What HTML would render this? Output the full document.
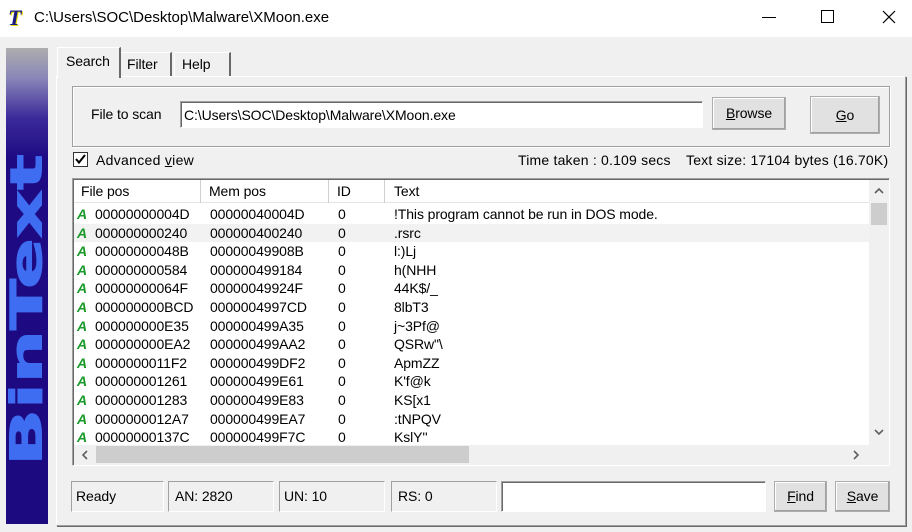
<!DOCTYPE html>
<html><head><style>
*{margin:0;padding:0;box-sizing:border-box}
body{width:912px;height:532px;background:#f0f0f0;font-family:"Liberation Sans",sans-serif;font-size:14px;color:#000;position:relative;overflow:hidden;letter-spacing:-0.1px}
.a{position:absolute;white-space:nowrap}
.btn{position:absolute;background:#e1e1e1;border:1px solid #adadad;box-shadow:inset -1px -1px 0 #a0a0a0,inset 1px 1px 0 #fff;text-align:center}
.sunk{position:absolute;border:1px solid;border-color:#a0a0a0 #fff #fff #a0a0a0;box-shadow:inset 1px 1px 0 #696969}
.panel{position:absolute;border:1px solid;border-color:#a0a0a0 #fff #fff #a0a0a0}
.row{position:absolute;left:74px;width:795px;height:18px;line-height:18px}
.row span{position:absolute}
.g{color:#1a9a2a;font-weight:bold;font-style:italic;left:3px}
</style></head><body>
<div class="a" style="left:0;top:0;width:912px;height:37px;background:#fff"></div>
<div class="a" style="left:8px;top:5px;font-size:22px;font-weight:bold;font-style:italic;color:#1a1a80;text-shadow:1px 1px 0 #e8d800;font-family:'Liberation Serif',serif">T</div>
<div class="a" style="left:34px;top:9px;font-size:15px;letter-spacing:0">C:\Users\SOC\Desktop\Malware\XMoon.exe</div>
<div class="a" style="left:762px;top:17px;width:14px;height:1px;background:#000"></div>
<div class="a" style="left:821px;top:10px;width:13px;height:13px;border:1px solid #000"></div>
<svg class="a" style="left:882px;top:10px" width="14" height="14"><path d="M1 1L13 13M13 1L1 13" stroke="#000" stroke-width="1.2"/></svg>

<div class="a" style="left:6px;top:48px;width:42px;height:476px;background:linear-gradient(#aeaeae 0,#8a86b8 30px,#3b2a9a 70px,#1e0b84 110px,#1c0a80 476px)"></div>
<div class="a" style="left:27px;top:310px;transform:translate(-50%,-50%) rotate(-90deg) scaleX(1.7);font-family:'DejaVu Sans',sans-serif;font-weight:900;font-size:44px;color:#3f6df2;letter-spacing:0;-webkit-text-stroke:1px #3f6df2">BinText</div>

<div class="panel" style="left:56px;top:76px;width:850px;height:450px;border-color:#fff #a0a0a0 #a0a0a0 #fff;box-shadow:1px 1px 0 #696969"></div>
<div class="a" style="left:57px;top:47px;width:64px;height:31px;background:#f0f0f0;border:1px solid #fff;border-right:2px solid #696969;border-bottom:none"></div>
<div class="a" style="left:66px;top:53px">Search</div>
<div class="a" style="left:121px;top:52px;width:51px;height:24px;border-top:1px solid #fff;border-right:2px solid #696969"></div>
<div class="a" style="left:127px;top:56px">Filter</div>
<div class="a" style="left:174px;top:52px;width:57px;height:24px;border-left:1px solid #fff;border-top:1px solid #fff;border-right:2px solid #696969"></div>
<div class="a" style="left:182px;top:56px">Help</div>

<div class="a" style="left:72px;top:86px;width:818px;height:61px;border:1px solid #a0a0a0;box-shadow:1px 1px 0 #fff,inset 1px 1px 0 #fff"></div>
<div class="a" style="left:91px;top:106px">File to scan</div>
<div class="sunk" style="left:180px;top:101px;width:523px;height:27px;background:#fff"></div>
<div class="a" style="left:184px;top:107px">C:\Users\SOC\Desktop\Malware\XMoon.exe</div>
<div class="btn" style="left:712px;top:97px;width:74px;height:33px;line-height:31px"><u>B</u>rowse</div>
<div class="btn" style="left:810px;top:96px;width:70px;height:38px;line-height:36px"><u>G</u>o</div>

<div class="a" style="left:73px;top:152px;width:15px;height:15px;background:#fff;border:1px solid #333"></div>
<svg class="a" style="left:75px;top:154px" width="11" height="11"><path d="M1 5L4 8.5L10 1" stroke="#000" stroke-width="2" fill="none"/></svg>
<div class="a" style="left:96px;top:152px;letter-spacing:0.3px">Advanced <u>v</u>iew</div>
<div class="a" style="left:518px;top:152px;letter-spacing:0.2px">Time taken : 0.109 secs</div>
<div class="a" style="left:686px;top:152px;letter-spacing:0.2px">Text size: 17104 bytes (16.70K)</div>

<div class="sunk" style="left:72px;top:178px;width:818px;height:288px;background:#fff"></div>
<div class="a" style="left:74px;top:180px;width:795px;height:23px;background:#fff;border-bottom:1px solid #e5e5e5"></div>
<div class="a" style="left:200px;top:180px;width:1px;height:23px;background:#d0d0d0"></div>
<div class="a" style="left:328px;top:180px;width:1px;height:23px;background:#d0d0d0"></div>
<div class="a" style="left:384px;top:180px;width:1px;height:23px;background:#d0d0d0"></div>
<div class="a" style="left:81px;top:183px">File pos</div>
<div class="a" style="left:209px;top:183px">Mem pos</div>
<div class="a" style="left:337px;top:183px">ID</div>
<div class="a" style="left:394px;top:183px">Text</div>
<div class="a" style="left:869px;top:180px;width:20px;height:265px;background:#f0f0f0"></div>
<svg class="a" style="left:874px;top:187px" width="10" height="7"><path d="M1 6L5 2L9 6" stroke="#606060" stroke-width="1.6" fill="none"/></svg>
<div class="a" style="left:871px;top:203px;width:16px;height:22px;background:#cdcdcd"></div>
<svg class="a" style="left:874px;top:429px" width="10" height="7"><path d="M1 1L5 5L9 1" stroke="#606060" stroke-width="1.6" fill="none"/></svg>
<div class="a" style="left:74px;top:445px;width:815px;height:20px;background:#f0f0f0"></div>
<div class="a" style="left:96px;top:446px;width:373px;height:17px;background:#cdcdcd"></div>
<svg class="a" style="left:81px;top:450px" width="7" height="10"><path d="M6 1L2 5L6 9" stroke="#606060" stroke-width="1.6" fill="none"/></svg>
<svg class="a" style="left:853px;top:450px" width="7" height="10"><path d="M1 1L5 5L1 9" stroke="#606060" stroke-width="1.6" fill="none"/></svg>

<div class="row" style="top:205px"><span class="g">A</span><span style="left:21px">00000000004D</span><span style="left:136px">00000040004D</span><span style="left:264px">0</span><span style="left:320px">!This program cannot be run in DOS mode.</span></div>
<div class="row" style="top:224px;background:#f2f2f2;width:795px"><span class="g">A</span><span style="left:21px">000000000240</span><span style="left:136px">000000400240</span><span style="left:264px">0</span><span style="left:320px">.rsrc</span></div>
<div class="row" style="top:242px"><span class="g">A</span><span style="left:21px">00000000048B</span><span style="left:136px">00000049908B</span><span style="left:264px">0</span><span style="left:320px">l:)Lj</span></div>
<div class="row" style="top:261px"><span class="g">A</span><span style="left:21px">000000000584</span><span style="left:136px">000000499184</span><span style="left:264px">0</span><span style="left:320px">h(NHH</span></div>
<div class="row" style="top:279px"><span class="g">A</span><span style="left:21px">00000000064F</span><span style="left:136px">00000049924F</span><span style="left:264px">0</span><span style="left:320px">44K$/_</span></div>
<div class="row" style="top:298px"><span class="g">A</span><span style="left:21px">000000000BCD</span><span style="left:136px">0000004997CD</span><span style="left:264px">0</span><span style="left:320px">8lbT3</span></div>
<div class="row" style="top:317px"><span class="g">A</span><span style="left:21px">000000000E35</span><span style="left:136px">000000499A35</span><span style="left:264px">0</span><span style="left:320px">j~3Pf@</span></div>
<div class="row" style="top:335px"><span class="g">A</span><span style="left:21px">000000000EA2</span><span style="left:136px">000000499AA2</span><span style="left:264px">0</span><span style="left:320px">QSRw"\</span></div>
<div class="row" style="top:354px"><span class="g">A</span><span style="left:21px">0000000011F2</span><span style="left:136px">000000499DF2</span><span style="left:264px">0</span><span style="left:320px">ApmZZ</span></div>
<div class="row" style="top:372px"><span class="g">A</span><span style="left:21px">000000001261</span><span style="left:136px">000000499E61</span><span style="left:264px">0</span><span style="left:320px">K'f@k</span></div>
<div class="row" style="top:391px"><span class="g">A</span><span style="left:21px">000000001283</span><span style="left:136px">000000499E83</span><span style="left:264px">0</span><span style="left:320px">KS[x1</span></div>
<div class="row" style="top:410px"><span class="g">A</span><span style="left:21px">0000000012A7</span><span style="left:136px">000000499EA7</span><span style="left:264px">0</span><span style="left:320px">:tNPQV</span></div>
<div class="row" style="top:428px;height:17px;overflow:hidden"><span class="g">A</span><span style="left:21px">00000000137C</span><span style="left:136px">000000499F7C</span><span style="left:264px">0</span><span style="left:320px">KslY''</span></div>

<div class="panel" style="left:71px;top:481px;width:93px;height:31px"></div><div class="a" style="left:76px;top:488px">Ready</div>
<div class="panel" style="left:168px;top:481px;width:106px;height:31px"></div><div class="a" style="left:175px;top:488px">AN: 2820</div>
<div class="panel" style="left:279px;top:481px;width:106px;height:31px"></div><div class="a" style="left:284px;top:488px">UN: 10</div>
<div class="panel" style="left:391px;top:481px;width:106px;height:31px"></div><div class="a" style="left:398px;top:488px">RS: 0</div>
<div class="sunk" style="left:501px;top:481px;width:265px;height:31px;background:#fff"></div>
<div class="btn" style="left:774px;top:481px;width:53px;height:31px;line-height:29px"><u>F</u>ind</div>
<div class="btn" style="left:835px;top:481px;width:55px;height:31px;line-height:29px"><u>S</u>ave</div>
</body></html>
